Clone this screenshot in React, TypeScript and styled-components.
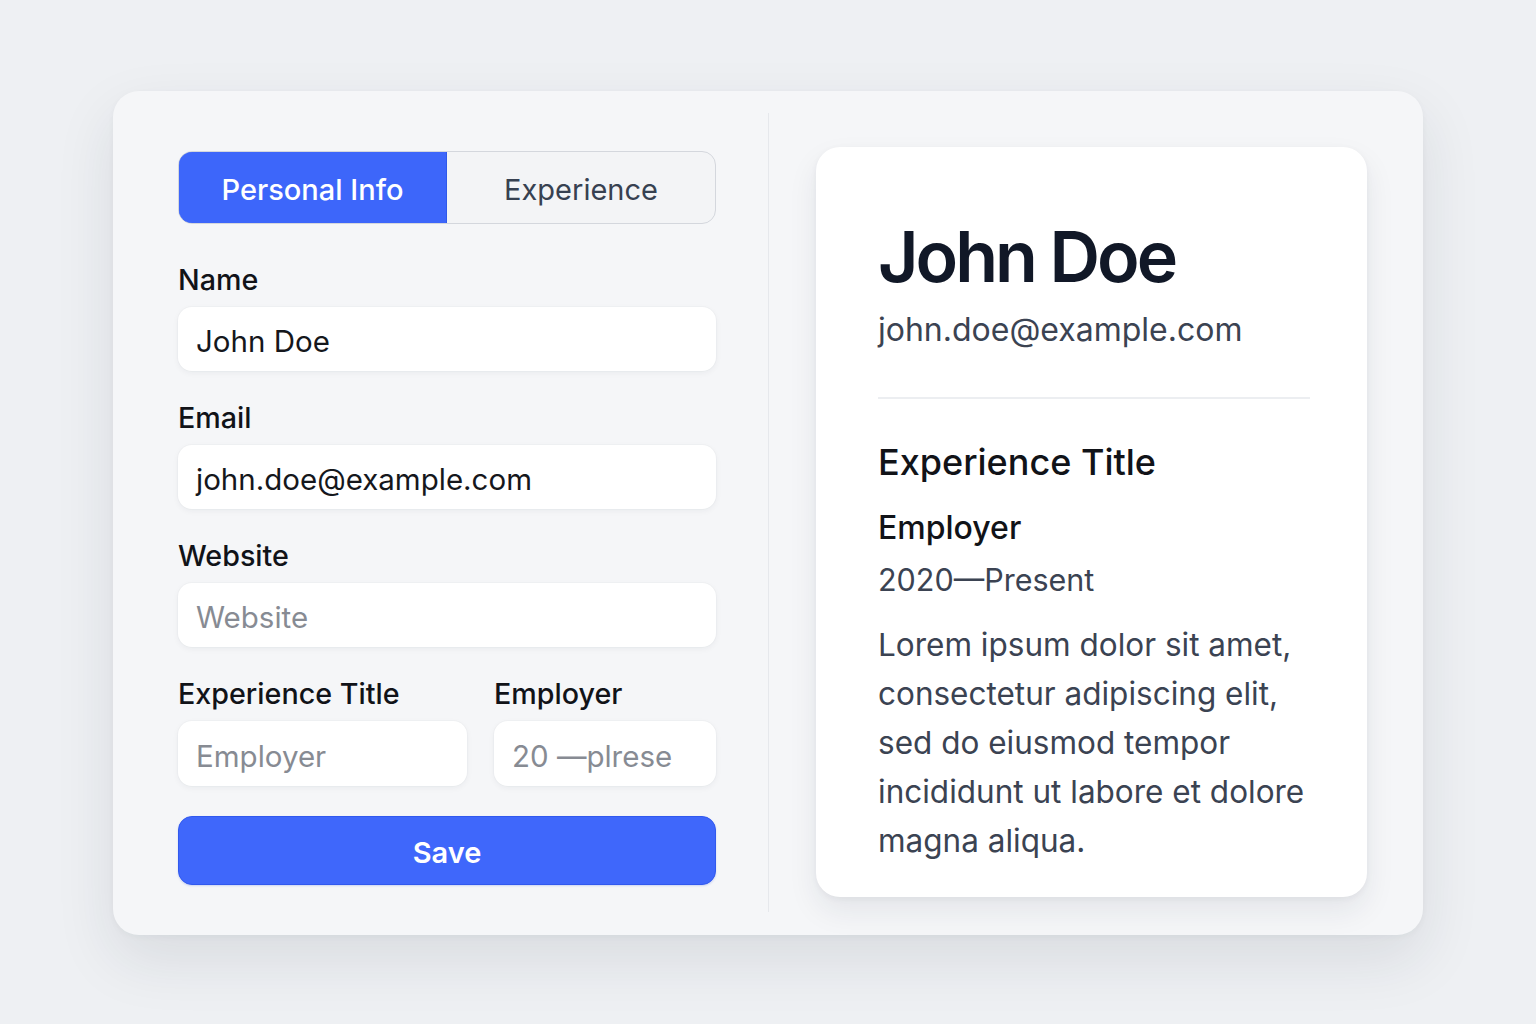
import React from "react";
import styled, { createGlobalStyle } from "styled-components";

const Global = createGlobalStyle`
  * { box-sizing: border-box; }
  html, body { margin: 0; padding: 0; }
  body {
    background: #eef0f3;
    font-family: Inter, "Noto Sans", "Liberation Sans", sans-serif;
    -webkit-font-smoothing: antialiased;
  }
`;

const Page = styled.div`
  min-height: 100vh;
  display: flex;
  align-items: center;
  justify-content: center;
`;

const Shell = styled.div`
  margin-top: 2px;
  width: 1310px;
  height: 844px;
  background: #f5f6f8;
  border-radius: 26px;
  box-shadow: 0 24px 60px rgba(30, 40, 60, 0.1), 0 2px 6px rgba(30, 40, 60, 0.04);
  padding: 56px 56px 38px 65px;
  display: grid;
  grid-template-columns: 538px 1fr 551px;
  align-items: start;
`;

const FormColumn = styled.div`
  margin-top: 4px;
  display: flex;
  flex-direction: column;
`;

const VDivider = styled.div`
  align-self: stretch;
  justify-self: start;
  margin: -34px 0 -15px 52px;
  width: 1px;
  background: #e6e8ec;
`;

const Tabs = styled.div`
  display: grid;
  grid-template-columns: 268px 1fr;
  height: 73px;
  border: 1px solid #d4d7dd;
  border-radius: 14px;
  overflow: hidden;
  background: #f3f4f6;
  margin-bottom: 39px;
`;

const Tab = styled.button<{ $active?: boolean }>`
  border: ${(p) => (p.$active ? "1px solid #2f59ea" : "none")};
  margin: ${(p) => (p.$active ? "-1px 0 -1px -1px" : "0")};
  background: ${(p) => (p.$active ? "#3d66fa" : "transparent")};
  color: ${(p) => (p.$active ? "#ffffff" : "#374151")};
  font-family: inherit;
  font-size: 29px;
  font-weight: ${(p) => (p.$active ? 500 : 400)};
  display: flex;
  align-items: center;
  justify-content: center;
  border-radius: ${(p) => (p.$active ? "14px 0 0 14px" : "0")};
  padding: 3px 0 0;
`;

const Field = styled.div`
  display: flex;
  flex-direction: column;
  gap: 10px;
  margin-bottom: 30px;
  min-width: 0;
`;

const Label = styled.label`
  font-size: 28.7px;
  line-height: 34px;
  font-weight: 500;
  color: #111318;
`;

const Input = styled.div<{ $placeholder?: boolean; $h?: number }>`
  height: ${(p) => p.$h ?? 64}px;
  background: #ffffff;
  border-radius: 14px;
  box-shadow: 0 2px 6px rgba(20, 30, 50, 0.05), 0 0 0 1px rgba(20, 30, 50, 0.02);
  display: flex;
  align-items: center;
  padding: 4px 18px 0;
  font-size: 29.5px;
  color: ${(p) => (p.$placeholder ? "#878b93" : "#15171c")};
  white-space: nowrap;
  overflow: hidden;
`;

const Row = styled.div`
  display: grid;
  grid-template-columns: 289px 222px;
  column-gap: 27px;
`;

const SaveButton = styled.button`
  height: 69px;
  border: 1px solid #3159ee;
  border-radius: 14px;
  background: #3f67fb;
  color: #ffffff;
  font-family: inherit;
  font-size: 29px;
  font-weight: 600;
  padding: 4px 0 0;
  box-shadow: 0 1px 2px rgba(40, 80, 220, 0.2);
`;

const Preview = styled.div`
  height: 750px;
  background: #ffffff;
  border-radius: 24px;
  box-shadow: 0 14px 30px rgba(30, 40, 60, 0.08), 0 2px 6px rgba(30, 40, 60, 0.05);
  padding: 70px 57px 0 62px;
  display: flex;
  flex-direction: column;
`;

const Name = styled.h1`
  margin: 0;
  font-size: 70px;
  line-height: 80px;
  font-weight: 600;
  letter-spacing: -3px;
  color: #111827;
`;

const Email = styled.div`
  margin-top: 13px;
  font-size: 32px;
  line-height: 40px;
  color: #3b4352;
`;

const HRule = styled.hr`
  border: none;
  height: 2px;
  background: #eceef1;
  margin: 47px 0 41px;
`;

const ExpTitle = styled.h2`
  margin: 0;
  font-size: 36px;
  line-height: 44px;
  font-weight: 500;
  color: #111318;
`;

const Employer = styled.h3`
  margin: 24px 0 0;
  font-size: 32px;
  line-height: 40px;
  font-weight: 500;
  color: #111318;
`;

const Dates = styled.div`
  margin-top: 12px;
  font-size: 30.5px;
  line-height: 40px;
  color: #3b4352;
`;

const Body = styled.p`
  margin: 20px 0 0;
  font-size: 31.5px;
  line-height: 49px;
  color: #3b4352;
`;

export default function App() {
  return (
    <>
      <Global />
      <Page>
        <Shell>
          <FormColumn>
            <Tabs>
              <Tab $active>Personal Info</Tab>
              <Tab>Experience</Tab>
            </Tabs>
            <Field>
              <Label>Name</Label>
              <Input>John Doe</Input>
            </Field>
            <Field>
              <Label>Email</Label>
              <Input>john.doe@example.com</Input>
            </Field>
            <Field>
              <Label>Website</Label>
              <Input $placeholder>Website</Input>
            </Field>
            <Row>
              <Field>
                <Label>Experience Title</Label>
                <Input $placeholder $h={65}>Employer</Input>
              </Field>
              <Field>
                <Label>Employer</Label>
                <Input $placeholder $h={65}>20 —plrese</Input>
              </Field>
            </Row>
            <SaveButton>Save</SaveButton>
          </FormColumn>
          <VDivider />
          <Preview>
            <Name>John Doe</Name>
            <Email>john.doe@example.com</Email>
            <HRule />
            <ExpTitle>Experience Title</ExpTitle>
            <Employer>Employer</Employer>
            <Dates>2020—Present</Dates>
            <Body>
              Lorem ipsum dolor sit amet,
              <br />
              consectetur adipiscing elit,
              <br />
              sed do eiusmod tempor
              <br />
              incididunt ut labore et dolore
              <br />
              magna aliqua.
            </Body>
          </Preview>
        </Shell>
      </Page>
    </>
  );
}
